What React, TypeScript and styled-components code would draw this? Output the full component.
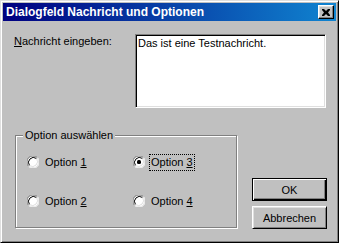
import styled, { createGlobalStyle } from "styled-components";

const GlobalStyle = createGlobalStyle`
    html, body {
        margin: 0;
        padding: 0;
        background: #c0c0c0;
    }
    body {
        font-family: "Liberation Sans", Arial, sans-serif;
        font-size: 11px;
        color: #000;
    }
`;

const Window = styled.div`
    box-sizing: border-box;
    width: 339px;
    height: 243px;
    background: #c0c0c0;
    border: 1px solid;
    border-color: #dfdfdf #000 #000 #dfdfdf;
    box-shadow: inset 1px 1px #fff, inset -1px -1px #808080;
    padding: 2px;
    display: flex;
    flex-direction: column;
`;

const TitleBar = styled.div`
    height: 18px;
    display: flex;
    align-items: center;
    justify-content: space-between;
    padding: 0 2px 0 3px;
    background: linear-gradient(to right, #000080, #1084d0);
    color: #fff;
    font-weight: bold;
    font-size: 12px;
`;

const CloseButton = styled.button`
    box-sizing: border-box;
    width: 16px;
    height: 14px;
    padding: 0;
    display: flex;
    align-items: center;
    justify-content: center;
    background: #c0c0c0;
    border: 1px solid;
    border-color: #fff #000 #000 #fff;
    box-shadow: inset -1px -1px #808080, inset 1px 1px #dfdfdf;
`;

const Body = styled.div`
    flex: 1;
    display: flex;
    flex-direction: column;
    padding: 13px 10px 0 11px;
`;

const TopRow = styled.div`
    display: flex;
    justify-content: space-between;
    align-items: flex-start;
`;

const Label = styled.label`
    line-height: 13px;
    margin-top: 1px;
`;

const Key = styled.span`
    text-decoration: underline;
`;

const TextBox = styled.div`
    box-sizing: border-box;
    width: 191px;
    height: 74px;
    background: #fff;
    border: 1px solid;
    border-color: #808080 #fff #fff #808080;
    box-shadow: inset 1px 1px #000, inset -1px -1px #dfdfdf;
    padding: 2px 3px 0 2px;
    line-height: 13px;
`;

const BottomRow = styled.div`
    display: flex;
    justify-content: space-between;
    align-items: flex-end;
    margin-top: 27px;
`;

const GroupBox = styled.div`
    position: relative;
    box-sizing: border-box;
    width: 222px;
    height: 93px;
    margin-left: 1px;
    border: 1px solid #808080;
    box-shadow: inset 1px 1px #fff, 1px 1px #fff;
    padding: 18px 0 0 11px;
    display: grid;
    grid-template-columns: 106px auto;
    grid-auto-rows: 16px;
    row-gap: 23px;
`;

const Legend = styled.span`
    position: absolute;
    top: -7px;
    left: 7px;
    padding: 0 2px;
    background: #c0c0c0;
    line-height: 13px;
`;

const RadioItem = styled.div`
    display: flex;
    align-items: center;
    gap: 4px;
`;

const RadioText = styled.span<{ $focused?: boolean }>`
    line-height: 13px;
    padding: 1px;
    border: 1px dotted ${(p) => (p.$focused ? "#000" : "transparent")};
`;

const ButtonColumn = styled.div`
    display: flex;
    flex-direction: column;
    gap: 5px;
    margin-right: -1px;
    margin-bottom: -1px;
`;

const PushButton = styled.button<{ $isDefault?: boolean }>`
    box-sizing: border-box;
    width: 75px;
    height: 23px;
    padding: 0;
    font-family: "Liberation Sans", Arial, sans-serif;
    font-size: 11px;
    color: #000;
    background: #c0c0c0;
    border: 1px solid;
    border-color: ${(p) => (p.$isDefault ? "#000" : "#fff #000 #000 #fff")};
    box-shadow: ${(p) =>
        p.$isDefault
            ? "inset 1px 1px #fff, inset -1px -1px #000, inset -2px -2px #808080"
            : "inset 1px 1px #dfdfdf, inset -1px -1px #808080"};
`;

function RadioCircle({ checked }: { checked?: boolean }) {
    return (
        <svg width="12" height="12" viewBox="0 0 12 12">
            <circle cx="6" cy="6" r="5.5" fill="#fff" />
            <path d="M1.6 10.4 A6 6 0 0 1 10.4 1.6" stroke="#808080" strokeWidth="1" fill="none" />
            <path d="M10.4 1.6 A6 6 0 0 1 1.6 10.4" stroke="#fff" strokeWidth="1" fill="none" />
            <path d="M2.5 9.5 A5 5 0 0 1 9.5 2.5" stroke="#000" strokeWidth="1" fill="none" />
            <path d="M9.5 2.5 A5 5 0 0 1 2.5 9.5" stroke="#dfdfdf" strokeWidth="1" fill="none" />
            {checked && <rect x="4" y="4" width="4" height="4" rx="1.5" fill="#000" />}
        </svg>
    );
}

function Radio({ n, checked, focused }: { n: number; checked?: boolean; focused?: boolean }) {
    return (
        <RadioItem>
            <RadioCircle checked={checked} />
            <RadioText $focused={focused}>
                Option <Key>{n}</Key>
            </RadioText>
        </RadioItem>
    );
}

export default function App() {
    return (
        <>
            <GlobalStyle />
            <Window>
                <TitleBar>
                    <span>Dialogfeld Nachricht und Optionen</span>
                    <CloseButton aria-label="Schließen">
                        <svg width="8" height="7" viewBox="0 0 8 7">
                            <path d="M0 0h2l2 2 2-2h2v1L6 3.5 8 6v1H6L4 5 2 7H0V6l2-2.5L0 1z" fill="#000" />
                        </svg>
                    </CloseButton>
                </TitleBar>
                <Body>
                    <TopRow>
                        <Label>
                            <Key>N</Key>achricht eingeben:
                        </Label>
                        <TextBox>Das ist eine Testnachricht.</TextBox>
                    </TopRow>
                    <BottomRow>
                        <GroupBox>
                            <Legend>Option auswählen</Legend>
                            <Radio n={1} />
                            <Radio n={3} checked focused />
                            <Radio n={2} />
                            <Radio n={4} />
                        </GroupBox>
                        <ButtonColumn>
                            <PushButton $isDefault>OK</PushButton>
                            <PushButton>Abbrechen</PushButton>
                        </ButtonColumn>
                    </BottomRow>
                </Body>
            </Window>
        </>
    );
}
